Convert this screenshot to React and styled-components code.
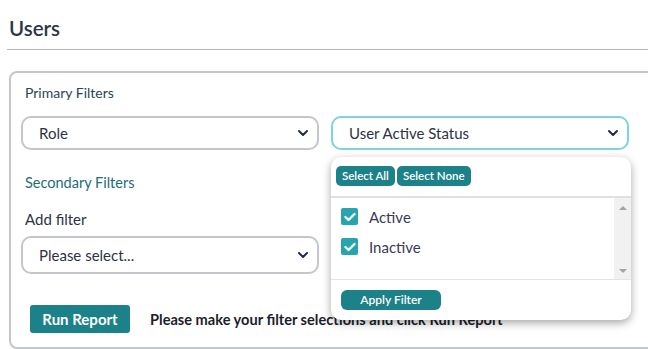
import React from 'react'
import styled, { createGlobalStyle } from 'styled-components'

const GlobalStyle = createGlobalStyle`
    body {
        margin: 0;
        font-family: Lato, "Open Sans", sans-serif;
        background: #ffffff;
        overflow: hidden;
    }
`

const Page = styled.div`
    padding: 16px 0 0 9px;
    width: 639px;
    height: 333px;
    overflow: hidden;
`

const Title = styled.h1`
    margin: 0;
    font-size: 20.5px;
    font-weight: 600;
    color: #2c3646;
    line-height: 25px;
`

const Rule = styled.hr`
    margin: 8px 0 0 -2px;
    border: none;
    border-top: 1px solid #b4b7bc;
`

const Card = styled.div`
    margin-top: 21px;
    margin-right: -30px;
    border: 2px solid #c3c6cb;
    border-radius: 8px;
    padding: 11px 0 14px 10px;
`

const Label = styled.div`
    font-size: ${p => p.$size || 14}px;
    color: ${p => p.$color || '#2a4656'};
    padding-left: ${p => p.$indent || 0}px;
    line-height: 18px;
`

const SelectRow = styled.div`
    display: grid;
    grid-template-columns: 298px 298px;
    gap: 12px;
    margin-top: ${p => p.$top || 0}px;
`

const SelectWrap = styled.div`
    position: relative;
`

const SelectBox = styled.div`
    height: ${p => p.$h || 34}px;
    box-sizing: border-box;
    border: 2px solid ${p => (p.$focus ? '#7dd5dc' : '#c3c6cb')};
    border-radius: 10px;
    display: flex;
    align-items: center;
    justify-content: space-between;
    padding: 0 8px 0 16px;
    font-size: 15px;
    color: #2d3345;
    background: #fff;
`

const Chevron = () => (
    <svg width="12" height="8" viewBox="0 0 12 8">
        <path d="M2 2 L6 6 L10 2" fill="none" stroke="#1f2b4a" strokeWidth="2" strokeLinecap="round" strokeLinejoin="round" />
    </svg>
)

const Popup = styled.div`
    position: absolute;
    top: 41px;
    left: 0;
    width: 300px;
    background: #fff;
    border-radius: 10px;
    box-shadow: 0 3px 8px rgba(0, 0, 0, 0.35);
    z-index: 5;
    padding-bottom: 10px;
    overflow: hidden;
`

const PopupActions = styled.div`
    display: flex;
    gap: 2px;
    padding: 9px 5px 10px;
    border-bottom: 2px solid #dde1e5;
`

const SmallButton = styled.button`
    height: 20px;
    padding: 0 6px;
    border: none;
    border-radius: 5px;
    background: #1c8189;
    color: #fff;
    font-family: inherit;
    font-size: 11.5px;
    font-weight: 600;
    line-height: 20px;
`

const List = styled.div`
    display: flex;
    height: 81px;
    border-bottom: 1px solid #e2e5e8;
`

const Items = styled.div`
    flex: 1;
    padding: 10px 0 0 10px;
    display: flex;
    flex-direction: column;
    gap: 13px;
`

const Item = styled.label`
    display: flex;
    align-items: center;
    gap: 11px;
    font-size: 15px;
    color: #3a3a58;
    height: 17px;
`

const Check = styled.span`
    width: 17px;
    height: 17px;
    border-radius: 2px;
    background: #28a4ae;
    display: flex;
    align-items: center;
    justify-content: center;
`

const Scrollbar = styled.div`
    width: 17px;
    background: #f1f1f1;
    display: flex;
    flex-direction: column;
    justify-content: space-between;
    align-items: center;
    padding: 8px 0 6px;
    box-sizing: border-box;
`

const Arrow = styled.span`
    width: 0;
    height: 0;
    border-left: 4px solid transparent;
    border-right: 4px solid transparent;
    ${p => (p.$down ? 'border-top: 4px solid #a3a3a3;' : 'border-bottom: 4px solid #a3a3a3;')}
`

const ApplyButton = styled(SmallButton)`
    margin: 10px 0 0 10px;
    width: 100px;
    border-radius: 6px;
    font-size: 12px;
`

const Footer = styled.div`
    display: flex;
    align-items: center;
    gap: 20px;
    margin: 31px 0 0 9px;
`

const RunButton = styled.button`
    width: 100px;
    height: 28px;
    border: none;
    border-radius: 3px;
    background: #1c8189;
    color: #fff;
    font-family: inherit;
    font-size: 15px;
    font-weight: 700;
`

const Hint = styled.span`
    font-size: 14.6px;
    font-weight: 700;
    color: #1c1d2b;
`

const Tick = () => (
    <svg width="12" height="10" viewBox="0 0 12 10">
        <path d="M1.5 5 L4.5 8 L10.5 2" fill="none" stroke="#fff" strokeWidth="2.4" strokeLinecap="round" strokeLinejoin="round" />
    </svg>
)

export default function App() {
    return (
        <Page>
            <GlobalStyle />
            <Title>Users</Title>
            <Rule />
            <Card>
                <Label $indent={4}>Primary Filters</Label>
                <SelectRow $top={14}>
                    <SelectWrap>
                        <SelectBox>Role<Chevron /></SelectBox>
                    </SelectWrap>
                    <SelectWrap>
                        <SelectBox $focus>User Active Status<Chevron /></SelectBox>
                        <Popup>
                            <PopupActions>
                                <SmallButton>Select All</SmallButton>
                                <SmallButton>Select None</SmallButton>
                            </PopupActions>
                            <List>
                                <Items>
                                    <Item><Check><Tick /></Check>Active</Item>
                                    <Item><Check><Tick /></Check>Inactive</Item>
                                </Items>
                                <Scrollbar>
                                    <Arrow />
                                    <Arrow $down />
                                </Scrollbar>
                            </List>
                            <ApplyButton>Apply Filter</ApplyButton>
                        </Popup>
                    </SelectWrap>
                </SelectRow>
                <div style={{ height: 24 }} />
                <Label $indent={4} $size={14.5} $color="#1d6c7c">Secondary Filters</Label>
                <div style={{ height: 18 }} />
                <Label $indent={4} $size={15} $color="#2d3345">Add filter</Label>
                <SelectRow $top={8}>
                    <SelectWrap>
                        <SelectBox $h={38}>Please select...<Chevron /></SelectBox>
                    </SelectWrap>
                </SelectRow>
                <Footer>
                    <RunButton>Run Report</RunButton>
                    <Hint>Please make your filter selections and click Run Report</Hint>
                </Footer>
            </Card>
        </Page>
    )
}
